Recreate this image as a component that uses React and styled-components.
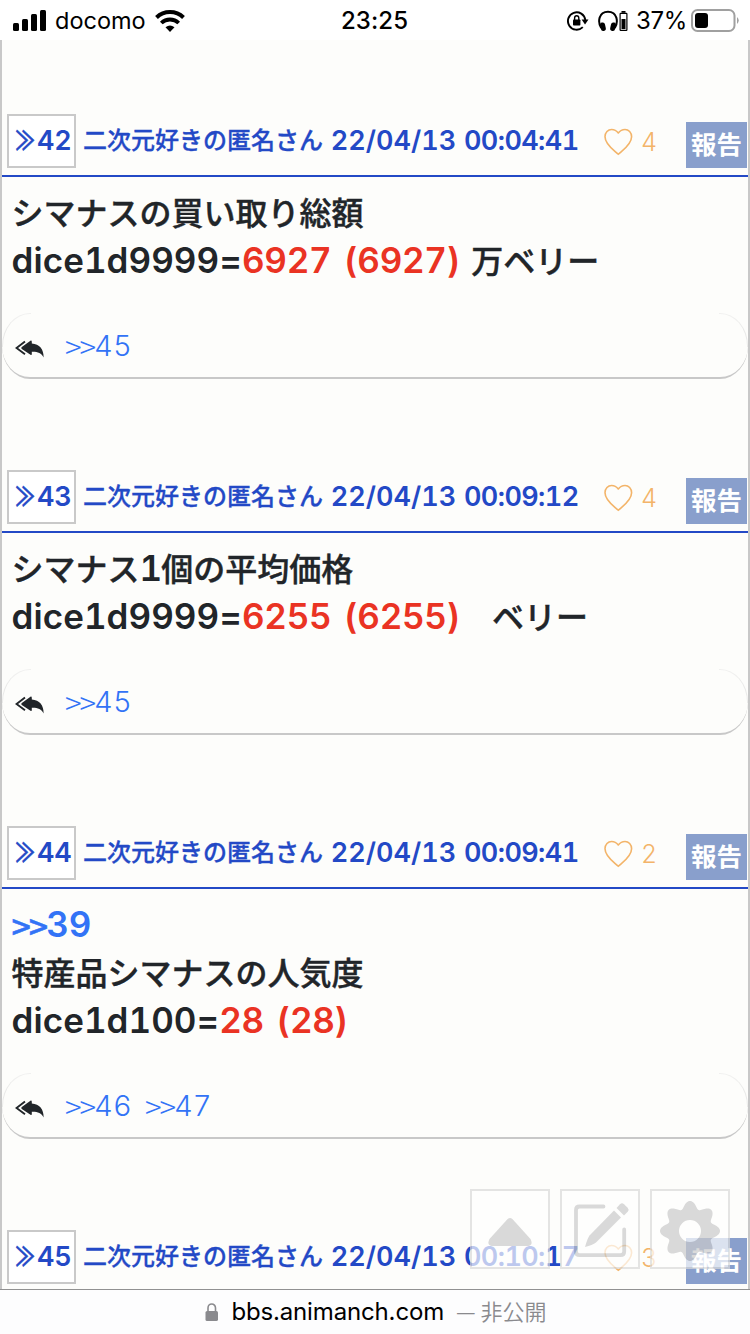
import React from "react";
import styled, { createGlobalStyle } from "styled-components";

const GlobalStyle = createGlobalStyle`
  body {
    margin: 0;
    background: #fff;
    overflow: hidden;
  }
  * {
    box-sizing: border-box;
  }
`;

const posts = [
  {
    id: 42,
    date: "22/04/13",
    time: "00:04:41",
    likes: 4,
    title: "シマナスの買い取り総額",
    dice: "dice1d9999=",
    result: "6927 (6927)",
    unit: " 万ベリー",
    replies: [45]
  },
  {
    id: 43,
    date: "22/04/13",
    time: "00:09:12",
    likes: 4,
    title: "シマナス1個の平均価格",
    dice: "dice1d9999=",
    result: "6255 (6255)",
    unit: "　ベリー",
    replies: [45]
  },
  {
    id: 44,
    date: "22/04/13",
    time: "00:09:41",
    likes: 2,
    quote: 39,
    title: "特産品シマナスの人気度",
    dice: "dice1d100=",
    result: "28 (28)",
    unit: "",
    replies: [46, 47]
  },
  { id: 45, date: "22/04/13", time: "00:10:17", likes: 3 }
];

////////////////////LAYOUT////////////////////////////////////

const Screen = styled.div`
  position: relative;
  display: flex;
  flex-direction: column;
  width: 750px;
  height: 1334px;
  overflow: hidden;
  background: #fff;
  font-family: "Noto Sans CJK JP", sans-serif;
`;

const StatusBar = styled.div`
  display: grid;
  grid-template-columns: 1fr auto 1fr;
  align-items: center;
  height: 40px;
  padding: 0 11px 0 13px;
  color: #000;
  font-family: Inter, sans-serif;
  font-size: 24px;
  line-height: 42px;
`;

const StatusGroup = styled.div`
  display: flex;
  align-items: center;
  justify-content: ${p => (p.$end ? "flex-end" : "flex-start")};
  gap: ${p => (p.$end ? "9px" : "0")};
  height: 40px;
`;

const Carrier = styled.span`
  margin: 0 9px 0 8px;
  font-size: 23.5px;
`;

const Clock = styled.span`
  padding-right: 3px;
  font-weight: 500;
  letter-spacing: 0.1px;
`;

const Percent = styled.span`
  margin: 0 -5px 0 -1px;
  letter-spacing: -0.3px;
`;

const Feed = styled.main`
  flex: 1;
  min-height: 0;
  overflow: hidden;
  padding-top: 74px;
  border-left: 2px solid #c8c8c8;
  border-right: 2px solid #c8c8c8;
  background: #fdfdfb;
`;

const Post = styled.article`
  margin-bottom: 91px;
`;

const PostHeader = styled.header`
  display: flex;
  align-items: flex-start;
  height: 63px;
  padding-left: 5px;
  border-bottom: 2px solid #2349c6;
  color: #2349c6;
  font-size: 24px;
  font-weight: 600;
  line-height: 49px;
  white-space: nowrap;
`;

const NumberBox = styled.div`
  display: flex;
  width: 69px;
  height: 54px;
  padding-left: 4px;
  border: 2px solid #c9c9c9;
  background: #fff;
`;

const Guillemet = styled.span`
  width: 24px;
  height: 48px;
  font-weight: 500;
  line-height: 46px;
  transform: scale(0.82, 1.1);
  -webkit-text-stroke: 0.5px currentColor;
`;

const Latin = styled.span`
  font-family: Inter, "Noto Sans CJK JP", sans-serif;
  font-size: ${p => p.$size}px;
  font-weight: ${p => p.$weight || 580};
  letter-spacing: ${p => p.$track || 0}px;
  word-spacing: ${p => p.$gap || 0}px;
  font-variant-numeric: tabular-nums;
  white-space: pre;
  -webkit-text-stroke: 0;
`;

const Author = styled.div`
  width: 521px;
  margin-left: 7px;
`;

const AuthorName = styled.span`
  font-weight: 500;
  vertical-align: 1px;
  -webkit-text-stroke: 0.3px currentColor;
`;

const Likes = styled.div`
  display: flex;
  align-items: flex-start;
  gap: 8px;
  color: #f3b469;
  line-height: 56px;

  svg {
    margin-top: 13.5px;
  }
`;

const Report = styled.div`
  height: 46px;
  margin: 8px 1px 0 auto;
  padding: 0 5px;
  background: #899fcc;
  color: #fff;
  font-size: 25.5px;
  line-height: 42px;
`;

const Body = styled.div`
  padding: 10px 10px 30px 9.6px;
  color: #212529;
  font-size: 32px;
  font-weight: 500;
  line-height: 48px;
  -webkit-text-stroke: 0.4px currentColor;
`;

const Line = styled.div`
  height: 48px;
  white-space: pre;
  word-spacing: 4px;
`;

const Red = styled.span`
  color: #ea3323;
`;

const Anchor = styled.span`
  color: #3273f6;
`;

const Arrows = styled.span`
  font-size: ${p => p.$size}px;
  letter-spacing: -2.1px;
  vertical-align: -3px;
  line-height: 1;
`;

const Replies = styled.footer`
  position: relative;
  display: flex;
  align-items: flex-start;
  gap: 13px;
  height: 66px;
  padding-left: 13px;
  border: 0 solid #c8c8c8;
  border-bottom-width: 2px;
  border-radius: 28px / 33px;
  font-size: 30px;
  font-weight: 300;
  line-height: 60px;

  svg {
    margin: 27px 7px 0 0;
  }

  /* faint hairlines that fade out at the upper corners */
  &::before,
  &::after {
    content: "";
    position: absolute;
    top: 0;
    width: 28px;
    height: 33px;
    border-top: 1px solid #f0f0ef;
  }
  &::before {
    left: 0;
    border-left: 1px solid #eaeae9;
    border-top-left-radius: 28px 33px;
  }
  &::after {
    right: 0;
    border-right: 1px solid #eaeae9;
    border-top-right-radius: 28px 33px;
  }
`;

const FloatingMenu = styled.nav`
  position: absolute;
  top: 1189px;
  right: 20px;
  display: flex;
  gap: 10px;
  opacity: 0.7;
`;

const FloatingButton = styled.div`
  width: 80px;
  height: 80px;
  border: 2px solid #dadada;
  background: #fff;
  color: #cbcbcb;

  svg {
    display: block;
  }
`;

const AddressBar = styled.div`
  display: flex;
  align-items: center;
  justify-content: center;
  height: 45px;
  padding-left: 2px;
  border-top: 1px solid #919191;
  background: #fdfdfe;
  color: #8a8a8e;
  font-size: 22px;
  font-weight: 350;
  line-height: 40px;
  white-space: pre;
`;

const Domain = styled.span`
  margin: 0 12px 0 12px;
  color: #000;
  font-family: Inter, sans-serif;
  font-size: 24px;
  font-weight: 400;
  letter-spacing: -0.15px;
  line-height: 44px;
`;

const Private = styled.span`
  height: 44px;
`;

////////////////////ICONS////////////////////////////////////

const SignalIcon = () => (
  <svg width="34" height="22" viewBox="0 0 34 22">
    <rect x="0" y="13" width="6" height="8" rx="1.5" />
    <rect x="9" y="9" width="6" height="12" rx="1.5" />
    <rect x="18" y="4" width="6" height="17" rx="1.5" />
    <rect x="27" y="0" width="6" height="21" rx="1.5" />
  </svg>
);

const WifiIcon = () => (
  <svg width="30" height="22" viewBox="0 0 30 22" fill="none" stroke="#000">
    <path d="M1.5 7.5 A19.5 19.5 0 0 1 28.5 7.5" strokeWidth="4" />
    <path d="M6.3 13 A12.5 12.5 0 0 1 23.7 13" strokeWidth="3.8" />
    <path d="M15 22 L10.5 17.3 Q15 13.8 19.5 17.3 Z" fill="#000" stroke="none" />
  </svg>
);

const RotationLockIcon = () => (
  <svg width="22" height="20" viewBox="0 0 22 20">
    <path
      d="M15.8 16.2 A8.7 8.7 0 1 1 18.3 9"
      fill="none"
      stroke="#000"
      strokeWidth="1.9"
    />
    <path d="M14.6 8.5 H21.5 L18 13.6 Z" />
    <rect x="6" y="8.5" width="7.4" height="6" rx="0.8" />
    <path
      d="M7.6 9 V7 A2.1 2.3 0 0 1 11.8 7 V9"
      fill="none"
      stroke="#000"
      strokeWidth="1.4"
    />
  </svg>
);

const HeadphonesIcon = () => (
  <svg width="30" height="22" viewBox="0 0 30 22">
    <path
      d="M3.2 18 C-0.5 12 0.5 1.7 10 1.7 C19.5 1.7 20.5 12 16.8 18"
      fill="none"
      stroke="#000"
      strokeWidth="2"
    />
    <rect x="2.5" y="12.5" width="5" height="8.5" rx="2.4" transform="rotate(-12 5 17)" />
    <rect x="12.5" y="12.5" width="5" height="8.5" rx="2.4" transform="rotate(12 15 17)" />
    <rect x="22.1" y="3.4" width="6.8" height="17" rx="0.6" fill="none" stroke="#000" strokeWidth="1.2" />
    <rect x="23.5" y="1" width="4" height="1.8" />
    <rect x="23.5" y="9" width="4" height="10" />
  </svg>
);

const BatteryIcon = () => (
  <svg width="48" height="24" viewBox="0 0 48 24">
    <rect x="1" y="1" width="42.5" height="21" rx="5.5" fill="none" stroke="#a0a0a0" strokeWidth="2" />
    <path d="M46 8 Q49.5 11.5 46 15 Z" fill="#a0a0a0" />
    <rect x="4" y="4" width="13" height="15" rx="3" />
  </svg>
);

const HeartIcon = () => (
  <svg width="29" height="28" viewBox="0 0 29 28" fill="none" stroke="currentColor" strokeWidth="1.6">
    <path
      d="M14.3 26.3 C11 23 1 17 1 8.8 C1 4.5 4 1.5 7.6 1.5 C10.8 1.5 13 3.3 14.3 5 C15.6 3.3 17.8 1.5 21 1.5 C24.6 1.5 27.6 4.5 27.6 8.8 C27.6 17 17.6 23 14.3 26.3 Z"
      strokeLinejoin="round"
    />
  </svg>
);

const ReplyIcon = () => (
  <svg width="30" height="18" viewBox="0 0 30 18" fill="#212529">
    <path d="M15.8 0.6 Q16.8 0.4 16.8 2 V3.6 C24.5 4 28.8 9.5 28.6 17.5 C26.5 13 22 11.5 16.8 11.8 V14 Q16.8 15.6 15.5 14.8 L6.8 9 Q5.6 8 6.8 7 Z" />
    <path d="M10 1.5 L1.5 8 L10 14.3" fill="none" stroke="#212529" strokeWidth="1.9" />
  </svg>
);

const UpIcon = () => (
  <svg width="76" height="76" viewBox="0 0 76 76" fill="currentColor">
    <path d="M35.6 28 Q38 26 40.4 28 L58.5 48 Q61.5 54 56.5 55 H19.5 Q14.5 54 17.5 48 Z" />
  </svg>
);

const EditIcon = () => (
  <svg width="76" height="76" viewBox="0 0 76 76" fill="currentColor">
    <path
      d="M41.5 15.5 H17.5 Q14 15.5 14 19 V60.5 Q14 64.2 17.5 64.2 H58.5 Q62.2 64.2 62.2 60.5 V38.5"
      fill="none"
      stroke="currentColor"
      strokeWidth="3.8"
      strokeLinecap="round"
    />
    <path d="M52 19.5 L59 26.5 L34 51.5 Q30.5 54 23 56 Q25 48.5 27.5 44.5 Z" />
    <path d="M54.5 17 L58 13.2 Q60 11.3 62 13.2 L65.7 16.8 Q67.5 18.8 65.7 20.8 L62 24.5 Z" />
  </svg>
);

// eight rounded teeth around a ring
const gearPoints = Array.from({ length: 240 }, (_, i) => {
  const a = (i / 240) * Math.PI * 2;
  const r = 26.5 + 3.7 * Math.cos(8 * a) - 0.2 * Math.cos(16 * a);
  return `${(38 + r * Math.cos(a)).toFixed(2)} ${(40 + r * Math.sin(a)).toFixed(2)}`;
});

const GearIcon = () => (
  <svg width="76" height="76" viewBox="0 0 76 76" fill="currentColor">
    <path
      fillRule="evenodd"
      d={`M${gearPoints.join("L")}Z M49 40 a11 11 0 1 0 -22 0 a11 11 0 1 0 22 0 Z`}
    />
  </svg>
);

const LockIcon = () => (
  <svg width="14" height="19" viewBox="0 0 14 19">
    <rect x="0.5" y="8" width="12.5" height="10" rx="1.6" fill="#8a8a8e" />
    <path d="M3 9 V5 A3.75 4 0 0 1 10.5 5 V9" fill="none" stroke="#8a8a8e" strokeWidth="1.6" />
  </svg>
);

///////////////////////////////////////////////////////////////////

const mixed = text =>
  text.split(/(\d+)/).map((part, i) =>
    /\d/.test(part) ? (
      <Latin key={i} $size={35} $track={-1}>
        {part}
      </Latin>
    ) : (
      part
    )
  );

const PostItem = ({ post }) => (
  <Post>
    <PostHeader>
      <NumberBox>
        <Guillemet>≫</Guillemet>
        <Latin $size={27} $track={-0.3}>
          {post.id}
        </Latin>
      </NumberBox>
      <Author>
        <AuthorName>二次元好きの匿名さん</AuthorName>
        <Latin $size={27} $gap={0.6}>
          {" "}
          {post.date}{" "}
        </Latin>
        <Latin $size={27} $track={-0.6}>
          {post.time}
        </Latin>
      </Author>
      <Likes>
        <HeartIcon />
        <Latin $size={25} $weight={300}>
          {post.likes}
        </Latin>
      </Likes>
      <Report>報告</Report>
    </PostHeader>
    {post.title && (
      <>
        <Body>
          {post.quote && (
            <Line>
              <Anchor>
                <Arrows $size={34}>&gt;&gt;</Arrows>
                <Latin $size={35}>{post.quote}</Latin>
              </Anchor>
            </Line>
          )}
          <Line>{mixed(post.title)}</Line>
          <Line>
            <Latin $size={35} $track={0.05}>
              {post.dice}
            </Latin>
            <Red>
              <Latin $size={35} $track={-0.3} $gap={3.5}>
                {post.result}
              </Latin>
            </Red>
            {post.unit}
          </Line>
        </Body>
        <Replies>
          <ReplyIcon />
          {post.replies.map(id => (
            <Anchor key={id}>
              <Arrows $size={31}>&gt;&gt;</Arrows>
              <Latin $size={29} $weight={300} $track={0.2}>
                {id}
              </Latin>
            </Anchor>
          ))}
        </Replies>
      </>
    )}
  </Post>
);

const App = () => {
  return (
    <Screen>
      <GlobalStyle />
      <StatusBar>
        <StatusGroup>
          <SignalIcon />
          <Carrier>docomo</Carrier>
          <WifiIcon />
        </StatusGroup>
        <Clock>23:25</Clock>
        <StatusGroup $end>
          <RotationLockIcon />
          <HeadphonesIcon />
          <Percent>37%</Percent>
          <BatteryIcon />
        </StatusGroup>
      </StatusBar>
      <Feed>
        {posts.map(post => (
          <PostItem key={post.id} post={post} />
        ))}
      </Feed>
      <AddressBar>
        <LockIcon />
        <Domain>bbs.animanch.com</Domain>
        <Private>— 非公開</Private>
      </AddressBar>
      <FloatingMenu>
        <FloatingButton>
          <UpIcon />
        </FloatingButton>
        <FloatingButton>
          <EditIcon />
        </FloatingButton>
        <FloatingButton>
          <GearIcon />
        </FloatingButton>
      </FloatingMenu>
    </Screen>
  );
};

export default App;
